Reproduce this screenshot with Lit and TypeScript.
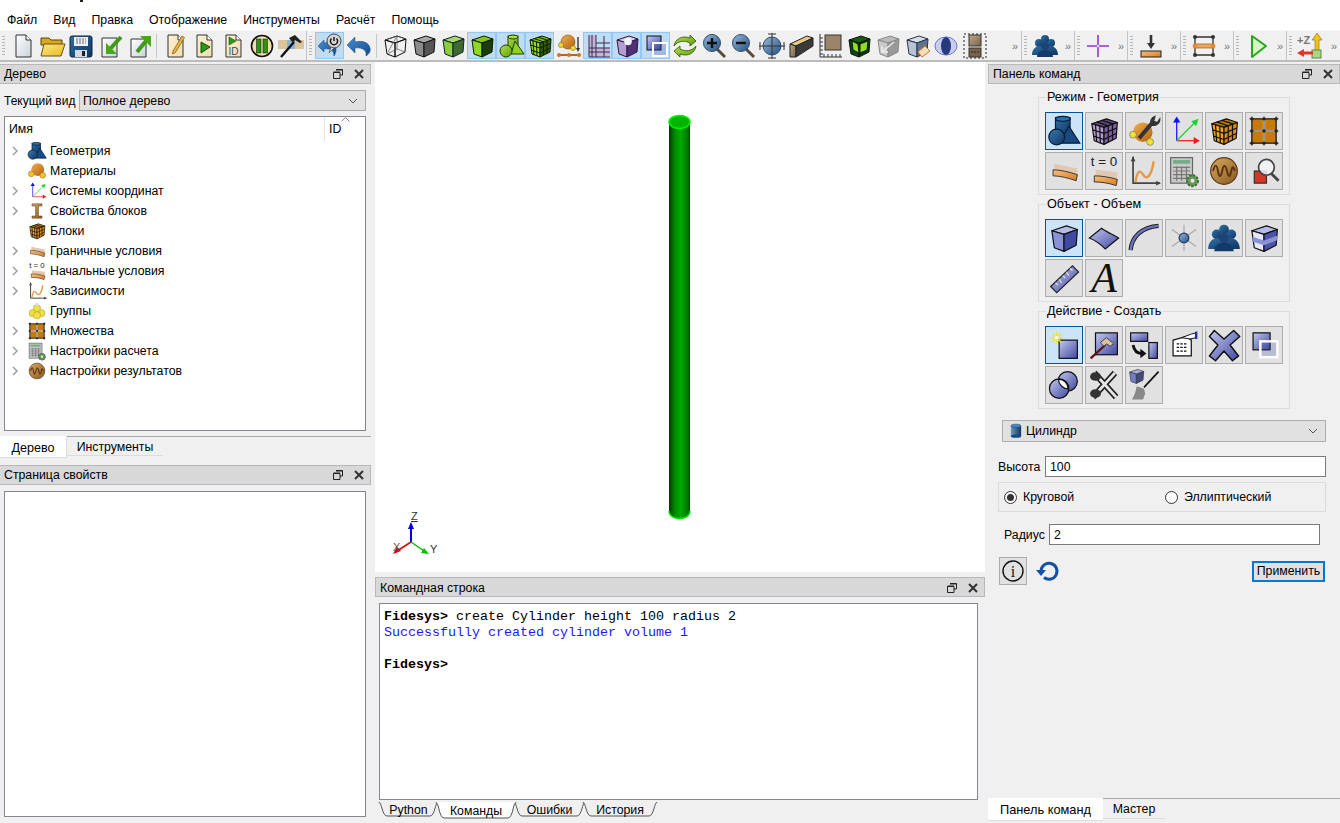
import { LitElement, html, svg, css } from 'lit';
import { customElement } from 'lit/decorators.js';

const cube = (t: string, l: string, r: string, s = '#111') => svg`
  <path d="M4 8 16 4 25 7 14 11Z" fill=${t} stroke=${s} stroke-linejoin="round"/>
  <path d="M4 8 14 11 14 25 6 22Z" fill=${l} stroke=${s} stroke-linejoin="round"/>
  <path d="M14 11 25 7 24 20 14 25Z" fill=${r} stroke=${s} stroke-linejoin="round"/>`;

const meshLines = (c: string) => svg`
  <path d="M7 9 8 23M10.5 10 11 24M4.5 13 14 16M5 18 14 21M17.5 9.5 17.5 23M21 8.5 21 21.5M14 16 24.5 11.5M14 21 24 16M8 6.5 18 10M12 5.2 22 8.4" stroke=${c} fill="none"/>`;

const tanPage = svg`<path d="M7 3h10l5 5v17H7z" fill="url(#tanPage)" stroke="#333"/><path d="M17 3v5h5" fill="#fff" stroke="#333"/>`;

const ICONS: Record<string, unknown> = {
  new: svg`<path d="M7 3h10l5 5v17H7z" fill="url(#paper)" stroke="#333"/><path d="M17 3v5h5" fill="#fff" stroke="#333"/>`,
  open: svg`<path d="M3 9V6h8l2 2h11v5H3z" fill="#d9a91c" stroke="#5b4510"/><path d="M3 24 6 12h21l-4 12z" fill="url(#yellow)" stroke="#6b5310"/>`,
  save: svg`<rect x="3" y="4" width="22" height="21" rx="2" fill="url(#navy)" stroke="#0b2540"/><rect x="7" y="5" width="14" height="9" fill="#eef1f6"/><path d="M9 7h10M9 9h10M9 11h10" stroke="#667" stroke-dasharray="2 1"/><rect x="8" y="18" width="12" height="7" fill="#d4d9e0"/><rect x="15" y="19" width="3" height="5" fill="#123"/>`,
  import: svg`<path d="M6 6h15v19H6z" fill="url(#paper)" stroke="#333"/><path d="M25 5 14 17" stroke="#3f9a17" stroke-width="4" fill="none"/><path d="M10 11v11h11z" fill="#49a81a"/>`,
  export: svg`<path d="M6 7h15v18H6z" fill="url(#paper)" stroke="#333"/><path d="M12 20 21 9" stroke="#3f9a17" stroke-width="4" fill="none"/><path d="M15 4h11v11z" fill="#49a81a"/>`,
  journal: svg`${tanPage}<path d="M12 19 21 4l2.5 1.5-9 15-3 1.5z" fill="#e7b53c" stroke="#7a5510" stroke-width=".7"/>`,
  run: svg`${tanPage}<path d="M11 10 20 15 11 21z" fill="#2c9a10" stroke="#145005"/>`,
  runid: svg`${tanPage}<path d="M10 5 17 9 10 13z" fill="#2c9a10" stroke="#145005" stroke-width=".6"/><text x="14.5" y="23" font-size="10" text-anchor="middle" font-family="Liberation Sans" fill="#2b4f6e">ID</text>`,
  pause: svg`<circle cx="14" cy="14" r="10.5" fill="#f3dfae" stroke="#111" stroke-width="1.6"/><rect x="8.5" y="7" width="4.5" height="14" fill="#2a9412" stroke="#111" stroke-width=".5"/><rect x="15" y="7" width="4.5" height="14" fill="#2a9412" stroke="#111" stroke-width=".5"/>`,
  hammer: svg`<rect x="1" y="8" width="9" height="9" fill="#d9c49b"/><rect x="18" y="8" width="9" height="9" fill="#d9c49b"/><rect x="10" y="8" width="8" height="9" fill="#8fb1d4"/><path d="M4 25 17 10" stroke="#111" stroke-width="2.4"/><path d="M12 6 18 3l7 7-2 1-5-3-2 3z" fill="#222"/>`,
  powerUndo: svg`<path d="M2 14 8 8v3c5-1 9 0 11 3 2 3 1 7-1 10 0-5-3-8-10-7v3z" fill="url(#blue)" stroke="#174a80" stroke-width=".5"/><circle cx="18" cy="9" r="7" fill="#d4d4d4" stroke="#444"/><path d="M18 5v4M15.500 6.500a3.600 3.600 0 1 0 5 0" fill="none" stroke="#111" stroke-width="1.400"/><path d="M15 15 13 21l5-5z" fill="#d4d4d4" stroke="#444" stroke-width=".6"/>`,
  undo: svg`<path d="M2 13 10 5v5c8-2 14 1 15 6 1 3-1 6-4 8 1-5-3-9-11-8v5z" fill="url(#blue)" stroke="#174a80" stroke-width=".5"/>`,
  cubeWire: svg`${cube('none', 'none', 'none')}<path d="M4 8 16 4 25 7M7 20 16 4M16 4 16 17 24 20M16 17 6 22" fill="none" stroke="#555" stroke-width=".7"/>`,
  cubeGray: cube('#a8a8a8', '#8a8a8a', '#555'),
  cubeGreenT: cube('#a8d86a', '#8bcf3a', '#3f6a30', '#123'),
  cubeGreen: cube('#84c41c', '#90d824', '#1a3d0a', '#0b1d05'),
  shapesGreen: svg`<rect x="11" y="4" width="10" height="13" fill="url(#green)" stroke="#1f3d05"/><ellipse cx="16" cy="5" rx="5" ry="2" fill="#a7df3c" stroke="#1f3d05"/><path d="M18 9 27 22H14z" fill="#8ed21e" stroke="#1f3d05"/><circle cx="9" cy="19" r="6" fill="url(#green)" stroke="#1f3d05"/>`,
  meshGreen: svg`${cube('#7fbf14', '#9adc24', '#325a08', '#0b1d05')}${meshLines('#0b1d05')}`,
  materials: svg`<circle cx="13" cy="10" r="7" fill="url(#orange)" stroke="#7a4a10" stroke-width=".6"/><circle cx="6" cy="13" r="2.5" fill="#f3d634" stroke="#6a5a10" stroke-width=".5"/><circle cx="18" cy="16" r="2.5" fill="#f3d634" stroke="#6a5a10" stroke-width=".5"/><path d="M3 23H25" stroke="#b5651d" stroke-width="2"/><circle cx="4" cy="23" r="2" fill="#c87a2a"/><circle cx="14" cy="23" r="2" fill="#c87a2a"/><circle cx="24" cy="23" r="2" fill="#c87a2a"/><path d="M23 5V18" stroke="#333" stroke-width="1.4"/><path d="M21 16h4l-2 4z" fill="#333"/>`,
  gridPurple: svg`<rect x="5" y="3" width="7" height="22" fill="#c5b5d9"/><rect x="5" y="16" width="21" height="9" fill="#c5b5d9"/><path d="M5 3V25M8 3V25M12 3V25M5 16H26M5 20H26M5 25H26M20 4V25M12 11H26" stroke="#3a2a4a" fill="none"/>`,
  cubeLight: svg`${cube('#d7c7e8', '#b49dd0', '#4e2f78', '#2a1845')}<circle cx="15" cy="9.5" r="3.8" fill="#f3f3f3"/>`,
  overlap: svg`<rect x="5" y="4" width="14" height="14" fill="url(#periw)" stroke="#111"/><rect x="11" y="11" width="14" height="13" fill="#3f4fa8" fill-opacity=".25" stroke="#fff" stroke-width="2"/>`,
  refresh: svg`<path d="M3 14C4 7 11 3 19 6V3l6 6-6 5v-3C13 8 7 9 3 14z" fill="url(#green)" stroke="#2a5008" stroke-width=".8"/><path d="M25 14C24 21 17 25 9 22v3l-6-6 6-5v3C15 20 21 19 25 14z" fill="url(#green)" stroke="#2a5008" stroke-width=".8"/>`,
  zoomIn: svg`<path d="M17 17 25 25" stroke="#5a4a3a" stroke-width="3"/><circle cx="12" cy="11" r="8.5" fill="url(#blueSphere)" stroke="#2b4f72"/><path d="M7 11H17M12 6V16" stroke="#111" stroke-width="2.4"/>`,
  zoomOut: svg`<path d="M17 17 25 25" stroke="#5a4a3a" stroke-width="3"/><circle cx="12" cy="11" r="8.5" fill="url(#blueSphere)" stroke="#2b4f72"/><path d="M7 11H17" stroke="#111" stroke-width="2.4"/>`,
  target: svg`<circle cx="14" cy="14" r="9" fill="url(#blueSphere)" stroke="#2b4f72"/><path d="M1 14H27M14 1V27M10 2H18M10 26H18M2 10V18M26 10V18" stroke="#333" fill="none"/>`,
  beam: svg`<path d="M3 12 20 4 26 6 9 14z" fill="#e7c88a" stroke="#222"/><path d="M3 12 9 14V25H3z" fill="url(#tan)" stroke="#222"/><path d="M9 14 26 6V14L9 25z" fill="#3a3a3a" stroke="#222"/>`,
  rulerBox: svg`<rect x="9" y="3" width="16" height="15" fill="#9c8468" stroke="#333"/><path d="M4 2V25H26M4 6H7M4 10H7M4 14H7M4 18H7M4 22H7M8 22V25M12 22V25M16 22V25M20 22V25M24 22V25" stroke="#333" fill="none"/>`,
  cubeFrame: svg`${cube('#1a5a10', '#163f10', '#0f330a', '#061a04')}<path d="M7 9 13 12 14 21 8 18z M15 12 23 9 22 18 15 21z" fill="#93dc24" stroke="#0b1d05"/>`,
  cubeGhost: svg`${cube('#bbb', '#c9c9c9', '#999', '#888')}<path d="M8 20 20 10M8 14v6h6" fill="none" stroke="#eee" stroke-width="1.4"/>`,
  cubePlane: svg`${cube('#d7dde8', '#b7c2d8', '#63738f', '#2a3448')}<path d="M15 20 22 14 27 19 19 25z" fill="#f3dfb8" stroke="#d9722a"/>`,
  lens: svg`<ellipse cx="14" cy="14" rx="11" ry="9" fill="#c8cdf0" stroke="#6a78c8"/><ellipse cx="14" cy="14" rx="5" ry="9" fill="#273a7a"/>`,
  boxDotted: svg`<rect x="3" y="2" width="22" height="24" fill="none" stroke="#222" stroke-dasharray="2 2"/><rect x="8" y="3" width="12" height="11" fill="url(#tan)" stroke="#333"/><rect x="8" y="16" width="12" height="9" fill="#7a6248" stroke="#333"/><path d="M10 20h8" stroke="#222" stroke-dasharray="2 1"/>`,
  people: svg`<g fill="url(#navy)"><circle cx="8" cy="11" r="4"/><circle cx="20" cy="11" r="4"/><circle cx="14" cy="7" r="4"/><path d="M1 23c0-6 4-9 8-9 2 0 3 1 5 1s3-1 5-1c4 0 8 3 8 9z"/></g><circle cx="14" cy="14" r="4" fill="#1c4474"/><path d="M6 25c0-5 4-7 8-7s8 2 8 7z" fill="#123a68"/>`,
  cross: svg`<path d="M14 3V25M3 14H25" stroke="#9335cc" stroke-width="1.6"/><circle cx="14" cy="14" r="1.5" fill="#fff" stroke="#9335cc" stroke-width=".6"/>`,
  load: svg`<path d="M14 3V14" stroke="#333" stroke-width="2.6"/><path d="M10 11h8l-4 6z" fill="#333"/><rect x="4" y="19" width="20" height="6" fill="url(#orangeBar)" stroke="#222"/>`,
  nodes: svg`<path d="M5 5H23V23H5z" fill="none" stroke="#333" stroke-width="1.3"/><rect x="4" y="12" width="20" height="4" fill="#eda65a" stroke="#9a5a14" stroke-width=".7"/><g fill="#333"><circle cx="5" cy="5" r="2"/><circle cx="23" cy="5" r="2"/><circle cx="5" cy="23" r="2"/><circle cx="23" cy="23" r="2"/></g><circle cx="5" cy="14" r="2.4" fill="#e88a2a"/><circle cx="23" cy="14" r="2.4" fill="#e88a2a"/>`,
  playGreen: svg`<path d="M9 4 23 14 9 25z" fill="#d8f7c8" stroke="#27a81c" stroke-width="2" stroke-linejoin="round"/>`,
  axesZ: svg`<text x="1" y="12" font-size="11" font-weight="700" font-family="Liberation Sans" fill="#777">+Z</text><path d="M21 1l5 7h-3v11h-4V8h-3z" fill="#f3c21c" stroke="#8a6a10" stroke-width=".6"/><rect x="16" y="18" width="9" height="8" fill="#a8d68a" stroke="#5a8a4a"/><path d="M1 21l7-4v2.5h9v3H8V25z" fill="#e0352a"/>`,
  // command panel
  shapesNavy: svg`<rect x="7" y="3" width="12" height="15" fill="url(#navy)" stroke="#0b1d35"/><ellipse cx="13" cy="4" rx="6" ry="2" fill="#2f6fa6" stroke="#0b1d35"/><path d="M18 10 27 24H10z" fill="#174a80" stroke="#0b1d35"/><circle cx="8" cy="19" r="6.5" fill="url(#blueSphere2)" stroke="#0b1d35"/>`,
  meshPurple: svg`${cube('#5a4a78', '#b49dd0', '#7a5fa0', '#111')}${meshLines('#111')}`,
  matWrench: svg`<circle cx="13" cy="15" r="8" fill="url(#orange)"/><circle cx="5" cy="17" r="2.8" fill="#f3e034" stroke="#665" stroke-width=".5"/><circle cx="19" cy="23" r="2.8" fill="#f3e034" stroke="#665" stroke-width=".5"/><path d="M10 20 21 7" stroke="#333" stroke-width="3.4"/><path d="M20 9a5 5 0 0 1 3-7l-1 4 3 1 2-3a5 5 0 0 1-7 5z" fill="#333" stroke="#333"/>`,
  axes: svg`<path d="M8 22V5" stroke="#1010ff"/><path d="M8 2l3 5H5z" fill="#1010ff"/><path d="M8 22H24" stroke="#f01818"/><path d="M27 22l-5 3v-6z" fill="#f01818"/><path d="M8 22 23 7" stroke="#20d030"/><path d="M26 4l-2 6-4-4z" fill="#20d030"/>`,
  meshOrange: svg`${cube('#b97a08', '#f3a818', '#d98a10', '#111')}${meshLines('#111')}`,
  gridOrange: svg`<rect x="4" y="4" width="20" height="20" fill="#c87a08" stroke="#333"/><path d="M14 2V26M2 14H26" stroke="#f3f3f3" stroke-width="1.8"/><path d="M14 2V26M2 14H26M4 2V26M24 2V26M2 4H26M2 24H26" stroke="#333" stroke-width=".8"/><g fill="#222"><circle cx="4" cy="4" r="1.4"/><circle cx="14" cy="4" r="1.4"/><circle cx="24" cy="4" r="1.4"/><circle cx="4" cy="14" r="1.4"/><circle cx="14" cy="14" r="1.4"/><circle cx="24" cy="14" r="1.4"/><circle cx="4" cy="24" r="1.4"/><circle cx="14" cy="24" r="1.4"/><circle cx="24" cy="24" r="1.4"/></g>`,
  bc: svg`<path d="M6 8 25 12V19L6 14z" fill="#e0c9b0"/><path d="M5 13C11 13 19 15 25 17L24 22C18 20 11 18 5 18z" fill="url(#orangeBar)" stroke="#222" stroke-width=".7"/>`,
  bc0: svg`<text x="14" y="10" font-size="11" text-anchor="middle" font-family="Liberation Sans" fill="#222">t = 0</text><path d="M7 13 25 15V21L7 18z" fill="#e0c9b0"/><path d="M6 18C12 18 19 19 25 21L24 26C18 24 12 23 6 23z" fill="url(#orangeBar)" stroke="#222" stroke-width=".7"/>`,
  graph: svg`<path d="M5 2V24H27" fill="none" stroke="#444" stroke-width="1.4"/><path d="M3 6l2-4 2 4zM24 22l4 2-4 2z" fill="#444"/><path d="M7 23C9 10 12 15 14 18S20 19 22 6" fill="none" stroke="#e09a4a" stroke-width="2"/>`,
  calc: svg`<rect x="3" y="3" width="18" height="21" fill="#c9c9c9" stroke="#666"/><rect x="5" y="5" width="14" height="3" fill="#6fae88"/><path d="M5 11H19M5 14H19M5 17H19M5 20H19M8 10V22M12 10V22M16 10V22" stroke="#777"/><circle cx="21" cy="22" r="4.5" fill="#6a9a58" stroke="#3a6a38" stroke-dasharray="2 1" stroke-width="1.6"/><circle cx="21" cy="22" r="1.6" fill="#e6e6e6"/>`,
  wave: svg`<circle cx="14" cy="14" r="11" fill="url(#tan2)" stroke="#5a3d1a"/><path d="M5 14c1.500-6 3-6 4 0s2.500 5 3.500 0 2.500-6 4 0 2.500 5 3.500 0 2-3 3 0" fill="none" stroke="#5a3010" stroke-width="1.5"/>`,
  magRed: svg`<rect x="6" y="14" width="10" height="10" fill="#d8352a" stroke="#333"/><circle cx="16" cy="11" r="6.5" fill="#f0f4f8" fill-opacity=".85" stroke="#444" stroke-width="1.4"/><path d="M20 16 26 22" stroke="#444" stroke-width="2.4"/>`,
  volume: cube('#b6bce8', '#8a92d8', '#3f4aa0'),
  surface: svg`<path d="M2 14 12 6C16 9 21 11 26 14L15 23C11 19 7 16 2 14z" fill="url(#periw)" stroke="#111"/>`,
  curve: svg`<path d="M3 24C4 13 12 5 26 4" fill="none" stroke="#222" stroke-width="3.6"/><path d="M3 24C4 13 12 5 26 4" fill="none" stroke="#6a72c0" stroke-width="2"/>`,
  vertex: svg`<path d="M14 3V25M4 7 24 21M24 7 4 21" stroke="#aaa"/><circle cx="14" cy="14" r="4" fill="url(#blueSphere)" stroke="#223a6a"/>`,
  striped: svg`${cube('#b6bce8', '#e6e8f5', '#4a54a8')}<path d="M4.500 13 14 16 14 20 5 17zM14 16 25 12 24.500 16 14 20z" fill="#8a92d8"/>`,
  ruler: svg`<path d="M3 21 21 4 26 9 8 26z" fill="url(#periw)" stroke="#222"/><path d="M7 18l2 2M10 15l2 3M13 12l2 2M16 9l2 3M19 6l2 2" stroke="#ddd"/>`,
  create: svg`<rect x="10" y="10" width="15" height="15" fill="url(#periw)" stroke="#111"/><path d="M8 3V13M3 8H13M4.500 4.500 11.500 11.500M11.500 4.500 4.500 11.500" stroke="#f3e034" stroke-width="1.2"/><circle cx="8" cy="8" r="1.5" fill="#fff"/>`,
  modify: svg`<rect x="7" y="4" width="18" height="18" fill="url(#periw)" stroke="#111"/><path d="M3 25 15 14" stroke="#5a1010" stroke-width="1.8"/><path d="M11 12 16 8l6 5-3 2-3-2-2 2z" fill="#d9c49b" stroke="#222" stroke-width=".6"/>`,
  move: svg`<rect x="3" y="4" width="14" height="7" fill="url(#periw)" stroke="#111"/><rect x="18" y="12" width="7" height="13" fill="url(#periw)" stroke="#111"/><path d="M5 14C6 19 9 21 12 21" fill="none" stroke="#111" stroke-width="2.400"/><path d="M11 17v8l5-4z" fill="#111"/>`,
  listEdit: svg`<path d="M5 10 16 7 20 10V23H5z" fill="#fff" stroke="#111"/><path d="M8 13H17M8 16H17M8 19H17" stroke="#111" stroke-dasharray="2 1"/><path d="M12 8 20 5l4-1v4l-5 1z" fill="#fff" stroke="#111" stroke-width=".8"/><rect x="23" y="3" width="2" height="6" fill="#2a2a90"/>`,
  bigX: svg`<path d="M6 2 14 9 22 2 27 7 19 14 26 23 21 27 14 19 7 27 2 23 9 14 2 7z" fill="url(#periw)" stroke="#111" stroke-width="1.2" stroke-linejoin="round"/>`,
  circles: svg`<circle cx="17" cy="11" r="8" fill="url(#periw)" stroke="#111"/><circle cx="10" cy="17" r="8" fill="url(#periw)" stroke="#111"/><path d="M9.500 9.200a8 8 0 0 1 8 8 8 8 0 0 1-8-8z" fill="#fff" stroke="#111"/>`,
  scissors: svg`<path d="M6 4 24 24M23 4 5 24" stroke="#222" stroke-width="5"/><path d="M6 4 24 24M23 4 5 24" stroke="#e6e6e6" stroke-width="2.400" fill="none"/><ellipse cx="7" cy="7" rx="4.500" ry="3.500" fill="#333"/><ellipse cx="7" cy="21" rx="4.500" ry="3.500" fill="#333"/>`,
  broom: svg`<g transform="translate(0 -1) scale(.55)">${cube('#a8b0e0', '#7080c8', '#404a80', '#333')}</g><path d="M26 3 14 16" stroke="#111" stroke-width="1.400"/><path d="M8 15l6 2 1 4c-1 2-1 4-2 5H4c2-3 3-6 4-11z" fill="#888"/>`,
  // tree only
  ibeam: svg`<path d="M7 4H21V7H16V21H21V24H7V21H12V7H7z" fill="url(#tan2)" stroke="#5a4a3a" stroke-width=".8"/>`,
  matBall: svg`<circle cx="15" cy="12" r="9" fill="url(#orange)"/><circle cx="6" cy="18" r="4" fill="#f3c230" stroke="#7a5a10" stroke-width=".6"/><circle cx="22" cy="20" r="4" fill="#f3c230" stroke="#7a5a10" stroke-width=".6"/>`,
  groups: svg`<g fill="#f0e040" stroke="#a09020" stroke-width=".7"><circle cx="8" cy="17" r="5"/><circle cx="20" cy="17" r="5"/><circle cx="14" cy="20" r="5"/><circle cx="14" cy="10" r="5"/></g><circle cx="14" cy="5" r="2.400" fill="#ddd"/>`,
  cylinder: svg`<rect x="5" y="5" width="18" height="18" fill="url(#cyl)"/><ellipse cx="14" cy="23" rx="9" ry="3" fill="#174a80"/><ellipse cx="14" cy="5" rx="9" ry="3" fill="#4a87b8" stroke="#174a80"/>`,
};

const ico = (name: string, size: number) =>
  html`<svg class="ico" width=${size} height=${size} viewBox="0 0 28 28">${ICONS[name]}</svg>`;

const grad = (id: string, a: string, b: string, horizontal = false) =>
  svg`<linearGradient id=${id} x1="0" y1="0" x2="1" y2=${horizontal ? 0 : 1}><stop offset="0" stop-color=${a}/><stop offset="1" stop-color=${b}/></linearGradient>`;

const MENU = ['Файл', 'Вид', 'Правка', 'Отображение', 'Инструменты', 'Расчёт', 'Помощь'];

// '|' is a separator, '*' marks a checked tool
const MAIN_TOOLS = ['new', 'open', 'save', 'import', 'export', '|', 'journal', 'run', 'runid', 'pause', 'hammer'];
const VIEW_TOOLS = [
  '*powerUndo', 'undo', '|', 'cubeWire', 'cubeGray', 'cubeGreenT', '*cubeGreen', '*shapesGreen', '*meshGreen',
  'materials', '*gridPurple', '*cubeLight', '*overlap', 'refresh', 'zoomIn', 'zoomOut', 'target', 'beam',
  'rulerBox', 'cubeFrame', 'cubeGhost', 'cubePlane', 'lens', 'boxDotted',
];
const SMALL_TOOLS = ['people', 'cross', 'load', 'nodes', 'playGreen', 'axesZ'];

const TREE = [
  { label: 'Геометрия', icon: 'shapesNavy', open: true },
  { label: 'Материалы', icon: 'matBall', open: false },
  { label: 'Системы координат', icon: 'axes', open: true },
  { label: 'Свойства блоков', icon: 'ibeam', open: true },
  { label: 'Блоки', icon: 'meshOrange', open: false },
  { label: 'Граничные условия', icon: 'bc', open: true },
  { label: 'Начальные условия', icon: 'bc0', open: true },
  { label: 'Зависимости', icon: 'graph', open: true },
  { label: 'Группы', icon: 'groups', open: false },
  { label: 'Множества', icon: 'gridOrange', open: true },
  { label: 'Настройки расчета', icon: 'calc', open: true },
  { label: 'Настройки результатов', icon: 'wave', open: true },
];

const GROUPS = [
  {
    title: 'Режим - Геометрия',
    icons: ['shapesNavy', 'meshPurple', 'matWrench', 'axes', 'meshOrange', 'gridOrange', 'bc', 'bc0', 'graph', 'calc', 'wave', 'magRed'],
  },
  {
    title: 'Объект - Объем',
    icons: ['volume', 'surface', 'curve', 'vertex', 'people', 'striped', 'ruler', 'A'],
  },
  {
    title: 'Действие - Создать',
    icons: ['create', 'modify', 'move', 'listEdit', 'bigX', 'overlap', 'circles', 'scissors', 'broom'],
  },
];

const CMD_TABS = [
  { label: 'Python', width: 61, active: false },
  { label: 'Команды', width: 82, active: true },
  { label: 'Ошибки', width: 73, active: false },
  { label: 'История', width: 76, active: false },
];

@customElement('app-root')
export class AppRoot extends LitElement {
  static override styles = css`
    :host {
      display: flex;
      flex-direction: column;
      width: 1340px;
      height: 823px;
      overflow: hidden;
      background: #f0f0f0;
      font: 12.3px 'Liberation Sans', Arial, sans-serif;
      color: #000;
    }
    .defs { position: absolute; width: 0; height: 0; }
    .ico { display: block; flex: none; }

    .title { height: 10px; background: #fff; flex: none; }
    .title i { display: block; width: 3px; height: 2px; margin-left: 80px; background: #222; }

    .menu {
      display: flex;
      gap: 16px;
      height: 20px;
      padding-left: 7px;
      align-items: center;
      background: #fff;
      flex: none;
    }

    .toolbar {
      display: flex;
      flex: none;
      background: #f0f0f0;
      border-top: 1px solid #f8f8f8;
      border-bottom: 2px solid #bcbcbc;
      box-sizing: border-box;
      height: 32px;
    }
    .tgroup {
      display: flex;
      align-items: center;
      box-sizing: border-box;
      border-right: 1px solid #c4c4c4;
      padding-left: 2px;
    }
    .tgroup.g1 { width: 307px; }
    .tgroup.g2 { width: 715px; }
    .tgroup.g3 { width: 53px; }
    .tgroup.last { width: 53px; border-right: none; }
    .grip {
      width: 3px;
      height: 20px;
      margin-right: 3px;
      flex: none;
      background: repeating-linear-gradient(#b5b5b5 0 1px, transparent 1px 3px);
    }
    .tool {
      display: flex;
      align-items: center;
      justify-content: center;
      box-sizing: border-box;
      width: 29px;
      height: 27px;
      flex: none;
    }
    .tool.on { background: #c0dcf3; border: 1px solid #90c8f6; }
    .tsep { width: 1px; height: 24px; margin: 0 3px; background: #c8c8c8; flex: none; }
    .more {
      margin-left: auto;
      padding-right: 4px;
      font-size: 11px;
      line-height: 14px;
      color: #777;
      letter-spacing: -1px;
    }

    .main { display: flex; flex: 1; min-height: 0; }
    .left { width: 375px; flex: none; display: flex; flex-direction: column; padding-top: 2px; box-sizing: border-box; }
    .center { width: 613px; flex: none; display: flex; flex-direction: column; }
    .right { flex: 1; display: flex; flex-direction: column; padding-top: 2px; min-width: 0; }

    .dock-head {
      display: flex;
      align-items: center;
      box-sizing: border-box;
      height: 20px;
      padding: 0 6px 0 4px;
      background: #d8d8d8;
      border: 1px solid #b8b8b8;
      flex: none;
    }
    .dock-head span { flex: 1; }
    .dock-head svg { display: block; flex: none; margin-left: 11px; }
    .left .dock-head { width: 371px; border-left: none; }

    .view-row { display: flex; align-items: center; margin: 6px 9px 5px 4px; gap: 4px; }
    .view-row > span { width: 71px; flex: none; white-space: nowrap; font-size: 12px; }
    .combo {
      display: flex;
      align-items: center;
      box-sizing: border-box;
      flex: 1;
      height: 21px;
      padding: 0 7px 0 3px;
      background: #e1e1e1;
      border: 1px solid #adadad;
    }
    .combo span { flex: 1; }

    .tree {
      box-sizing: border-box;
      width: 362px;
      height: 315px;
      margin-left: 4px;
      background: #fff;
      border: 1px solid #828790;
    }
    .tree-head { display: flex; height: 24px; padding-left: 4px; align-items: center; position: relative; }
    .tree-head .name { width: 315px; }
    .tree-head .id { border-left: 1px solid #e5e5e5; padding-left: 4px; height: 24px; line-height: 24px; }
    .caret { position: absolute; left: 336px; top: 0; }
    .row { display: flex; align-items: center; height: 20px; }
    .row .arrow { width: 15px; display: flex; padding-left: 7px; flex: none; }
    .row .ico { margin-right: 3px; }

    .ltabs { display: flex; width: 371px; height: 29px; flex: none; margin-top: 5px; }
    .ltab {
      box-sizing: border-box;
      height: 22px;
      background: #fff;
      border-top: 1px solid #fff;
      line-height: 22px;
      text-align: center;
    }
    .ltab.a { width: 67px; font-size: 12.6px; border-right: 1px solid #dcdcdc; border-bottom: 1px solid #dcdcdc; }
    .ltab.b {
      width: 96px;
      height: 20px;
      line-height: 20px;
      background: #f0f0f0;
      border-top: 1px solid #a8a8a8;
      border-bottom: 1px solid #dcdcdc;
    }
    .ltab.rest { flex: 1; height: 1px; background: #a8a8a8; border: none; }

    .props {
      box-sizing: border-box;
      width: 362px;
      height: 326px;
      margin: 6px 0 0 4px;
      background: #fff;
      border: 1px solid #828790;
    }

    .viewport { position: relative; height: 510px; background: #fff; flex: none; margin-right: 3px; }
    .cyl { position: absolute; left: 290px; top: 51px; }
    .triad { position: absolute; left: 15px; top: 445px; }

    .cmd { flex: 1; display: flex; flex-direction: column; padding-top: 5px; margin-right: 3px; }
    .cmd .dock-head { padding-top: 1px; }
    .cmd-text {
      box-sizing: border-box;
      width: 599px;
      height: 197px;
      margin: 6px 0 0 4px;
      padding: 5px 4px;
      background: #fff;
      border: 1px solid #828790;
      font: 13.33px/16px 'Liberation Mono', 'Courier New', monospace;
      white-space: pre;
    }
    .cmd-text b { font-weight: 700; }
    .cmd-text .ok { color: #1a1aff; }
    .ctabs { display: flex; margin: 2px 0 0 3px; height: 18px; }
    .ctab { position: relative; height: 17px; line-height: 16px; text-align: center; flex: none; margin-right: -4px; }
    .ctab svg { position: absolute; left: 0; top: 0; }
    .ctab span { position: relative; }
    .ctab.on { line-height: 18px; z-index: 1; }

    .cmd-panel { padding-left: 50px; padding-top: 6px; display: flex; flex-direction: column; gap: 2px; }
    fieldset {
      box-sizing: border-box;
      width: 252px;
      margin: 0;
      padding: 8px 6px 4px;
      border: 1px solid #dcdcdc;
      min-inline-size: auto;
    }
    legend { padding: 0 1px; margin-left: 1px; height: 14px; line-height: 15px; font-size: 12.6px; }
    .btns { display: grid; grid-template-columns: repeat(6, 38px); grid-auto-rows: 38px; gap: 2px; height: 78px; }
    .btn {
      display: flex;
      align-items: center;
      justify-content: center;
      box-sizing: border-box;
      background: #e1e1e1;
      border: 1px solid #adadad;
    }
    .btn.on { background: #cce4f7; border-color: #005499; }
    .btn .letter { font: italic 42px/36px 'Liberation Serif', serif; color: #111; }

    .form { display: flex; flex-direction: column; padding: 11px 14px 0 10px; }
    .form .combo { flex: none; height: 22px; margin: 0 0 14px 4px; padding-left: 5px; }
    .form .combo .ico { margin-right: 2px; }
    .field { display: flex; align-items: center; gap: 4px; }
    .field > span { width: 43px; flex: none; }
    .field.r > span { width: 41px; }
    .input {
      box-sizing: border-box;
      flex: 1;
      height: 21px;
      padding-left: 4px;
      line-height: 20px;
      background: #fff;
      border: 1px solid #7a7a7a;
    }
    .radios {
      display: flex;
      align-items: center;
      box-sizing: border-box;
      height: 30px;
      margin-top: 5px;
      padding-left: 5px;
      border: 1px solid #dcdcdc;
    }
    .radio { display: flex; align-items: center; gap: 6px; width: 161px; flex: none; }
    .dot {
      box-sizing: border-box;
      width: 13px;
      height: 13px;
      border-radius: 50%;
      border: 1px solid #333;
      background: #fff;
      display: flex;
      align-items: center;
      justify-content: center;
    }
    .dot.on::after { content: ''; width: 7px; height: 7px; border-radius: 50%; background: #333; }
    .field.r { margin: 12px 6px 0 6px; }
    .actions { display: flex; align-items: center; margin-top: 12px; }
    .info { width: 28px; height: 28px; margin-left: 1px; }
    .info svg { display: block; }
    .actions .ico { margin-left: 9px; }
    .apply {
      box-sizing: border-box;
      width: 73px;
      height: 21px;
      margin-left: auto;
      margin-right: 1px;
      line-height: 17px;
      text-align: center;
      background: #e1e1e1;
      border: 2px solid #0078d7;
    }
    .rtabs { display: flex; margin-top: auto; height: 25px; flex: none; }
    .rtab { box-sizing: border-box; text-align: center; }
    .rtab.a { width: 115px; height: 23px; line-height: 24px; font-size: 12.8px; background: #fff; border-bottom: 1px solid #dcdcdc; }
    .rtab.b { width: 62px; height: 21px; line-height: 21px; border-top: 1px solid #a8a8a8; border-bottom: 1px solid #dcdcdc; }
    .rtab.rest { flex: 1; height: 1px; background: #a8a8a8; }
  `;

  private _dockHead(title: string) {
    return html`<div class="dock-head">
      <span>${title}</span>
      <svg width="10" height="10" viewBox="0 0 10 10"><path d="M3 .5h6.500v5.500H7M.5 3.500h6.500v6H.5zM.5 3h6.500M3 1h6.500" fill="none" stroke="#222"/></svg>
      <svg width="10" height="10" viewBox="0 0 10 10"><path d="M1 1 9 9M9 1 1 9" stroke="#333" stroke-width="2"/></svg>
    </div>`;
  }

  private _tools(list: string[]) {
    return list.map((t) => {
      if (t === '|') return html`<div class="tsep"></div>`;
      const on = t.startsWith('*');
      const name = on ? t.slice(1) : t;
      return html`<div class="tool ${on ? 'on' : ''}">${ico(name, 28)}</div>`;
    });
  }

  private _tab(tab: { label: string; width: number; active: boolean }) {
    const w = tab.width;
    const h = tab.active ? 16 : 14;
    const d = `M0.5 0 C4 0 4 ${h} 9 ${h} H${w - 9} C${w - 4} ${h} ${w - 4} 0 ${w - 0.5} 0`;
    return html`<div class="ctab ${tab.active ? 'on' : ''}" style="width:${w}px">
      <svg width=${w} height="17"><path d=${d} fill=${tab.active ? '#fff' : '#f0f0f0'} stroke="#555"/></svg>
      <span>${tab.label}</span>
    </div>`;
  }

  override render() {
    return html`
      <svg class="defs">
        <defs>
          ${grad('paper', '#ffffff', '#c8d2dc')}
          ${grad('yellow', '#ffe98a', '#e8b820')}
          ${grad('navy', '#2f6fa6', '#0f3560')}
          ${grad('blue', '#4a90d0', '#0f4a90')}
          ${grad('green', '#b5e24a', '#5f9a10')}
          ${grad('tanPage', '#fdf1d8', '#f1dcae')}
          ${grad('tan', '#bda888', '#7a6248')}
          ${grad('tan2', '#d8a860', '#8a5a20')}
          ${grad('periw', '#c4c9f0', '#3f48a0')}
          ${grad('orange', '#f3b050', '#b06010')}
          ${grad('orangeBar', '#f5c080', '#d97a20')}
          ${grad('blueSphere', '#9ab8d8', '#23507e')}
          ${grad('blueSphere2', '#3a7ab0', '#0f3560')}
          ${grad('cyl', '#6a9ac0', '#0f3560', true)}
          <linearGradient id="cylGreen" x1="0" y1="0" x2="1" y2="0">
            <stop offset="0" stop-color="#003a00"/>
            <stop offset=".25" stop-color="#008400"/>
            <stop offset=".55" stop-color="#00aa00"/>
            <stop offset=".85" stop-color="#008000"/>
            <stop offset="1" stop-color="#005000"/>
          </linearGradient>
        </defs>
      </svg>

      <div class="title"><i></i></div>
      <div class="menu">${MENU.map((m) => html`<span>${m}</span>`)}</div>

      <div class="toolbar">
        <div class="tgroup g1"><div class="grip"></div>${this._tools(MAIN_TOOLS)}</div>
        <div class="tgroup g2"><div class="grip"></div>${this._tools(VIEW_TOOLS)}<span class="more">»</span></div>
        ${SMALL_TOOLS.map(
          (t, i) => html`<div class="tgroup g3 ${i === SMALL_TOOLS.length - 1 ? 'last' : ''}">
            <div class="grip"></div>${this._tools([t])}<span class="more">»</span>
          </div>`,
        )}
      </div>

      <div class="main">
        <div class="left">
          ${this._dockHead('Дерево')}
          <div class="view-row">
            <span>Текущий вид</span>
            <div class="combo">
              <span>Полное дерево</span>
              <svg width="10" height="6" viewBox="0 0 10 6"><path d="M1 1 5 5 9 1" fill="none" stroke="#555"/></svg>
            </div>
          </div>
          <div class="tree">
            <div class="tree-head">
              <div class="name">Имя</div>
              <div class="id">ID</div>
              <svg class="caret" width="9" height="5" viewBox="0 0 9 5"><path d="M.5 4.500 4.500 .5 8.500 4.500" fill="none" stroke="#888"/></svg>
            </div>
            ${TREE.map(
              (r) => html`<div class="row">
                <div class="arrow">
                  ${r.open
                    ? html`<svg width="6" height="10" viewBox="0 0 6 10"><path d="M1 1 5 5 1 9" fill="none" stroke="#999" stroke-width="1.400"/></svg>`
                    : ''}
                </div>
                ${ico(r.icon, 20)}
                <span>${r.label}</span>
              </div>`,
            )}
          </div>
          <div class="ltabs">
            <div class="ltab a">Дерево</div>
            <div class="ltab b">Инструменты</div>
            <div class="ltab rest"></div>
          </div>
          ${this._dockHead('Страница свойств')}
          <div class="props"></div>
        </div>

        <div class="center">
          <div class="viewport">
            <svg class="cyl" width="29" height="412" viewBox="0 0 29 412">
              <path d="M4 9V398C4 408 25 408 25 398V9z" fill="url(#cylGreen)"/>
              <path d="M4 398C4 408 25 408 25 398" fill="none" stroke="#00e000" stroke-width="1.500"/>
              <ellipse cx="14.500" cy="9" rx="10.500" ry="6.500" fill="#00b400" stroke="#00f000" stroke-width="1.500"/>
            </svg>
            <svg class="triad" width="50" height="52" viewBox="0 0 50 52" font-family="Liberation Sans" font-size="11">
              <path d="M21 35V18" stroke="#0000e0" stroke-width="2"/>
              <path d="M21 15l3 7h-6z" fill="#0000e0"/>
              <path d="M21 35 7 44" stroke="#e00000" stroke-width="1.500"/>
              <path d="M3 47l4-7 4 4z" fill="#e00000"/>
              <path d="M21 35 34 44" stroke="#00c000" stroke-width="1.500"/>
              <path d="M39 47l-8-1 3-5z" fill="#00c000"/>
              <text x="21" y="13" fill="#333" text-decoration="underline">Z</text>
              <text x="3" y="44" fill="#555">X</text>
              <text x="40" y="46" fill="#333">Y</text>
            </svg>
          </div>
          <div class="cmd">
            ${this._dockHead('Командная строка')}
            <div class="cmd-text"><b>Fidesys&gt;</b> create Cylinder height 100 radius 2
<span class="ok">Successfully created cylinder volume 1</span>

<b>Fidesys&gt;</b></div>
            <div class="ctabs">${CMD_TABS.map((t) => this._tab(t))}</div>
          </div>
        </div>

        <div class="right">
          ${this._dockHead('Панель команд')}
          <div class="cmd-panel">
            ${GROUPS.map(
              (g) => html`<fieldset>
                <legend>${g.title}</legend>
                <div class="btns">
                  ${g.icons.map(
                    (name, i) => html`<div class="btn ${i === 0 ? 'on' : ''}">
                      ${name === 'A' ? html`<span class="letter">A</span>` : ico(name, 34)}
                    </div>`,
                  )}
                </div>
              </fieldset>`,
            )}
          </div>
          <div class="form">
            <div class="combo">
              ${ico('cylinder', 16)}
              <span>Цилиндр</span>
              <svg width="10" height="6" viewBox="0 0 10 6"><path d="M1 1 5 5 9 1" fill="none" stroke="#555"/></svg>
            </div>
            <div class="field"><span>Высота</span><div class="input">100</div></div>
            <div class="radios">
              <div class="radio"><div class="dot on"></div>Круговой</div>
              <div class="radio"><div class="dot"></div>Эллиптический</div>
            </div>
            <div class="field r"><span>Радиус</span><div class="input">2</div></div>
            <div class="actions">
              <div class="btn info">
                <svg width="24" height="24" viewBox="0 0 24 24">
                  <circle cx="12" cy="12" r="10" fill="none" stroke="#111" stroke-width="1.400"/>
                  <text x="12" y="18" font-size="16" text-anchor="middle" font-family="Liberation Serif" fill="#111">i</text>
                </svg>
              </div>
              <svg class="ico" width="24" height="24" viewBox="0 0 24 24">
                <path d="M5 12a8 8 0 1 1 3 6.500" fill="none" stroke="#1450a8" stroke-width="3"/>
                <path d="M0 11h10l-5 6z" fill="#1450a8"/>
              </svg>
              <div class="apply">Применить</div>
            </div>
          </div>
          <div class="rtabs">
            <div class="rtab a">Панель команд</div>
            <div class="rtab b">Мастер</div>
            <div class="rtab rest"></div>
          </div>
        </div>
      </div>
    `;
  }
}
